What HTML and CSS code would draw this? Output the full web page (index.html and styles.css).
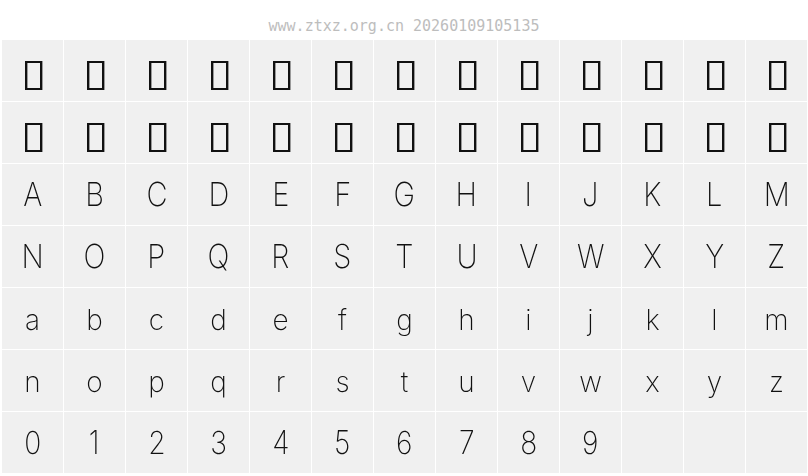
FILE: index.html
```html
<!DOCTYPE html>
<html>
<head>
<meta charset="utf-8">
<link rel="stylesheet" href="styles.css">
</head>
<body>
<div class="header">www.ztxz.org.cn 20260109105135</div>
<div class="grid">
  <div class="cell"><span class="tofu"></span></div>
  <div class="cell"><span class="tofu"></span></div>
  <div class="cell"><span class="tofu"></span></div>
  <div class="cell"><span class="tofu"></span></div>
  <div class="cell"><span class="tofu"></span></div>
  <div class="cell"><span class="tofu"></span></div>
  <div class="cell"><span class="tofu"></span></div>
  <div class="cell"><span class="tofu"></span></div>
  <div class="cell"><span class="tofu"></span></div>
  <div class="cell"><span class="tofu"></span></div>
  <div class="cell"><span class="tofu"></span></div>
  <div class="cell"><span class="tofu"></span></div>
  <div class="cell"><span class="tofu"></span></div>

  <div class="cell"><span class="tofu"></span></div>
  <div class="cell"><span class="tofu"></span></div>
  <div class="cell"><span class="tofu"></span></div>
  <div class="cell"><span class="tofu"></span></div>
  <div class="cell"><span class="tofu"></span></div>
  <div class="cell"><span class="tofu"></span></div>
  <div class="cell"><span class="tofu"></span></div>
  <div class="cell"><span class="tofu"></span></div>
  <div class="cell"><span class="tofu"></span></div>
  <div class="cell"><span class="tofu"></span></div>
  <div class="cell"><span class="tofu"></span></div>
  <div class="cell"><span class="tofu"></span></div>
  <div class="cell"><span class="tofu"></span></div>

  <div class="cell"><span class="g up">A</span></div><div class="cell"><span class="g up">B</span></div><div class="cell"><span class="g up">C</span></div><div class="cell"><span class="g up">D</span></div><div class="cell"><span class="g up">E</span></div><div class="cell"><span class="g up">F</span></div><div class="cell"><span class="g up">G</span></div><div class="cell"><span class="g up">H</span></div><div class="cell"><span class="g up">I</span></div><div class="cell"><span class="g up">J</span></div><div class="cell"><span class="g up">K</span></div><div class="cell"><span class="g up">L</span></div><div class="cell"><span class="g up">M</span></div>
  <div class="cell"><span class="g up">N</span></div><div class="cell"><span class="g up">O</span></div><div class="cell"><span class="g up">P</span></div><div class="cell"><span class="g up">Q</span></div><div class="cell"><span class="g up">R</span></div><div class="cell"><span class="g up">S</span></div><div class="cell"><span class="g up">T</span></div><div class="cell"><span class="g up">U</span></div><div class="cell"><span class="g up">V</span></div><div class="cell"><span class="g up">W</span></div><div class="cell"><span class="g up">X</span></div><div class="cell"><span class="g up">Y</span></div><div class="cell"><span class="g up">Z</span></div>
  <div class="cell"><span class="g lo">a</span></div><div class="cell"><span class="g lo">b</span></div><div class="cell"><span class="g lo">c</span></div><div class="cell"><span class="g lo">d</span></div><div class="cell"><span class="g lo">e</span></div><div class="cell"><span class="g lo">f</span></div><div class="cell"><span class="g lo">g</span></div><div class="cell"><span class="g lo">h</span></div><div class="cell"><span class="g lo">i</span></div><div class="cell"><span class="g lo">j</span></div><div class="cell"><span class="g lo">k</span></div><div class="cell"><span class="g lo">l</span></div><div class="cell"><span class="g lo">m</span></div>
  <div class="cell"><span class="g lo">n</span></div><div class="cell"><span class="g lo">o</span></div><div class="cell"><span class="g lo">p</span></div><div class="cell"><span class="g lo">q</span></div><div class="cell"><span class="g lo">r</span></div><div class="cell"><span class="g lo">s</span></div><div class="cell"><span class="g lo">t</span></div><div class="cell"><span class="g lo">u</span></div><div class="cell"><span class="g lo">v</span></div><div class="cell"><span class="g lo">w</span></div><div class="cell"><span class="g lo">x</span></div><div class="cell"><span class="g lo">y</span></div><div class="cell"><span class="g lo">z</span></div>
  <div class="cell"><span class="g dg">0</span></div><div class="cell"><span class="g dg">1</span></div><div class="cell"><span class="g dg">2</span></div><div class="cell"><span class="g dg">3</span></div><div class="cell"><span class="g dg">4</span></div><div class="cell"><span class="g dg">5</span></div><div class="cell"><span class="g dg">6</span></div><div class="cell"><span class="g dg">7</span></div><div class="cell"><span class="g dg">8</span></div><div class="cell"><span class="g dg">9</span></div><div class="cell"></div><div class="cell"></div><div class="cell"></div>
</div>
</body>
</html>
```

FILE: styles.css
```css
html, body {
  margin: 0;
  padding: 0;
  background: #ffffff;
}

.header {
  box-sizing: border-box;
  height: 40px;
  padding-top: 19px;
  line-height: 15px;
  font-family: "DejaVu Sans Mono", monospace;
  font-size: 15px;
  color: #bdbdbd;
  text-align: center;
}

.grid {
  display: grid;
  grid-template-columns: repeat(13, 61px);
  grid-auto-rows: 61px;
  gap: 1px;
  margin-left: 2px;
  filter: grayscale(1);
}

.cell {
  background: #f0f0f0;
  display: flex;
  align-items: center;
  justify-content: center;
  font-family: Inter, "DejaVu Sans", sans-serif;
  font-weight: 200;
  color: #111111;
  line-height: 1;
}

.g {
  display: block;
}

.tofu {
  box-sizing: border-box;
  width: 17px;
  height: 29px;
  border: 2px solid #111111;
  box-shadow: inset 1px 0 0 #9a9a9a, 1px 0 0 #9a9a9a;
  margin-top: 10px;
  margin-left: 2px;
}

.up {
  font-size: 33px;
  transform: scaleX(0.88);
}

.lo {
  font-size: 28px;
  margin-top: 2px;
}

.dg {
  font-size: 32px;
  transform: scaleX(0.88);
}
```
